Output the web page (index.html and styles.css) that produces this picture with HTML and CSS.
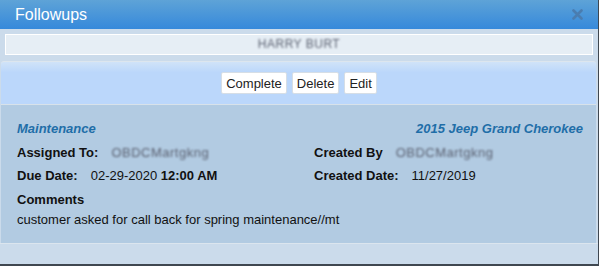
FILE: index.html
```html
<!DOCTYPE html>
<html lang="en">
<head>
  <meta charset="UTF-8" />
  <title>Followups</title>
  <link rel="stylesheet" href="styles.css">
</head>
<body>
  <div class="dialog">
    <div class="titlebar">
      <span class="title">Followups</span>
      <svg class="close" width="11" height="11" viewBox="0 0 11 11">
        <path d="M1.5 1.5 L9.5 9.5 M9.5 1.5 L1.5 9.5" stroke="#4a7db0" stroke-width="2.6" stroke-linecap="round" />
      </svg>
    </div>

    <div class="namebar"><span class="blurred">HARRY BURT</span></div>

    <div class="toolbar">
      <button>Complete</button>
      <button>Delete</button>
      <button>Edit</button>
    </div>

    <div class="details">
      <div class="type">Maintenance</div>
      <div class="vehicle">2015 Jeep Grand Cherokee</div>

      <div><span class="label">Assigned To:</span><span class="blurred">OBDCMartgkng</span></div>
      <div><span class="label">Created By</span><span class="blurred">OBDCMartgkng</span></div>

      <div><span class="label">Due Date:</span>02-29-2020 <b>12:00 AM</b></div>
      <div><span class="label">Created Date:</span>11/27/2019</div>

      <div class="comments">
        <div class="label">Comments</div>
        <div class="comment-text">customer asked for call back for spring maintenance//mt</div>
      </div>
    </div>

    <div class="footer"></div>
  </div>
</body>
</html>
```

FILE: styles.css
```css
body { margin: 0; background: #3f4750; font-family: Arial, "Liberation Sans", sans-serif; }

.dialog {
  width: 598px;
  height: 264px;
  background: #cbdbeb;
  display: flex;
  flex-direction: column;
}

.titlebar {
  height: 29px;
  padding: 0 15px 0 15px;
  display: flex;
  align-items: center;
  justify-content: space-between;
  background: linear-gradient(#5ea3d7, #3689db);
}
.title { color: #fff; font-size: 16px; }
.close { margin-right: 0; }

.namebar {
  margin: 5px 5px 0 5px;
  height: 19px;
  border: 1px solid #fff;
  background: #e6eef5;
  text-align: center;
  font-size: 12px;
  line-height: 19px;
}

.blurred {
  color: #5a6070;
  filter: blur(1px);
  letter-spacing: 0.5px;
}

.toolbar {
  margin: 6px 2px 0 1px;
  height: 42px;
  border-top: 1px solid #dde6ee;
  border-radius: 3px 3px 0 0;
  background: linear-gradient(#d0e3f8, #bbd7fb 25%);
  display: flex;
  justify-content: center;
  align-items: center;
  gap: 5px;
  padding-left: 1px;
}
.toolbar button {
  height: 22px;
  padding: 0 4px;
  background: #fff;
  border: 1px solid #d6dee6;
  border-radius: 2px;
  font-family: Arial, "Liberation Sans", sans-serif;
  font-size: 13px;
  color: #222;
}

.details {
  margin: 0 2px 0 1px;
  height: 139px;
  box-sizing: border-box;
  border-top: 1px solid #d8e2ea;
  background: #b2cbe2;
  padding: 16px 13px 0 16px;
  display: grid;
  grid-template-columns: 297px 1fr;
  grid-auto-rows: 16px;
  row-gap: 7.5px;
  font-size: 13px;
  line-height: 16px;
  color: #111;
}
.type, .vehicle { color: #1f6ea8; font-style: italic; font-weight: bold; }
.vehicle { text-align: right; }
.label { font-weight: bold; margin-right: 13px; }
.comments { grid-column: 1 / 3; }
.comments .label { margin-bottom: 4px; }

.footer {
  flex: 1;
  border-top: 1px solid #dbe5ee;
}
```
